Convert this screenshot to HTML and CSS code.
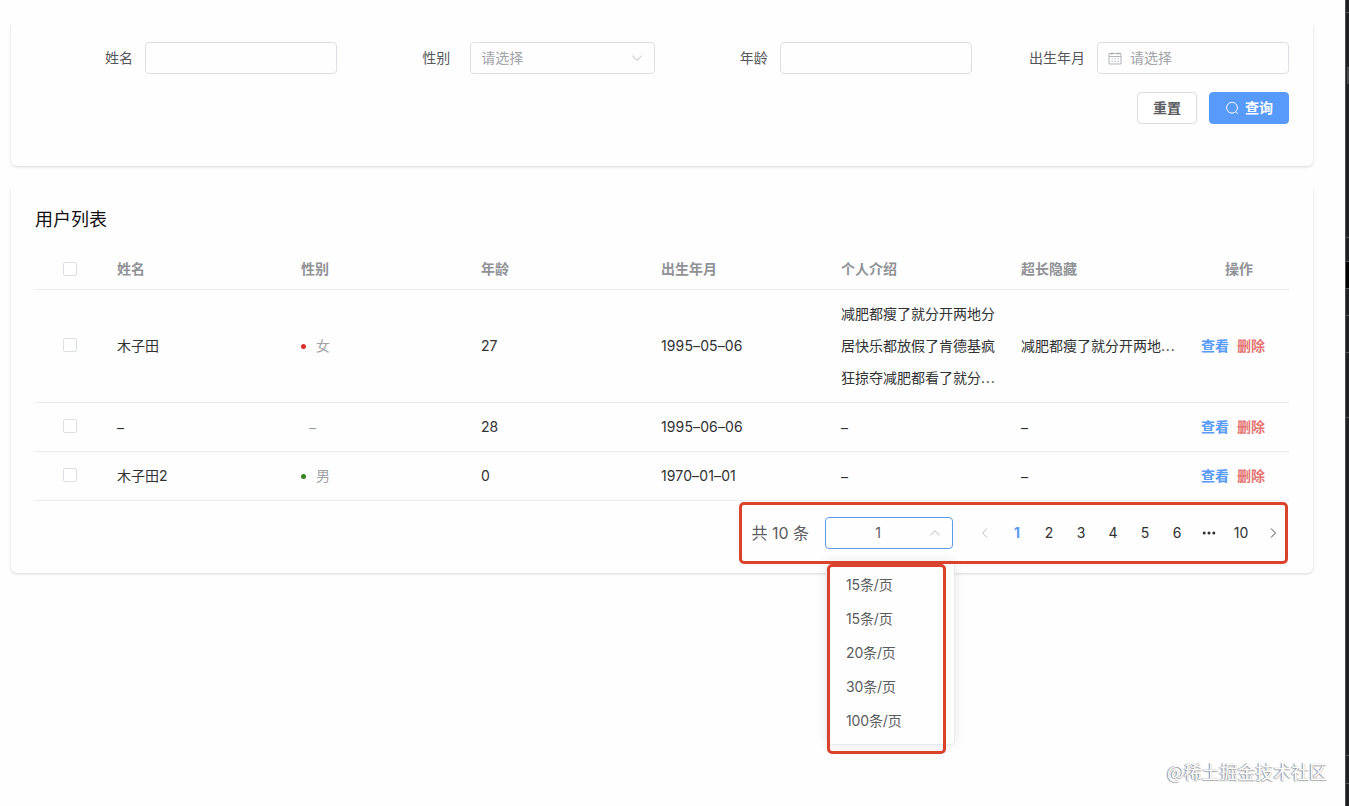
FILE: index.html
```html
<!DOCTYPE html>
<html lang="zh-CN">
<head>
<meta charset="utf-8">
<title>用户列表</title>
<link rel="stylesheet" href="styles.css">
</head>
<body>
<div class="page">
  <main class="main">
    <section class="card search">
      <div class="field"><label>姓名</label><div class="input"></div></div>
      <div class="field"><label>性别</label><div class="input select"><span>请选择</span>
        <svg class="arrow" viewBox="0 0 14 14"><path d="M2.2 4.7 7 9.3l4.8-4.6"/></svg></div></div>
      <div class="field"><label>年龄</label><div class="input"></div></div>
      <div class="field"><label>出生年月</label><div class="input date">
        <svg class="calendar" viewBox="0 0 14 14"><path d="M1 2.5h12v10.5H1zM1 5.5h12M4 1v3M10 1v3M3.5 8h1.3M6.4 8h1.3M9.3 8h1.3M3.5 10.5h1.3M6.4 10.5h1.3M9.3 10.5h1.3"/></svg><span>请选择</span></div></div>
      <div class="actions">
        <button class="btn">重置</button>
        <button class="btn primary"><svg class="search-icon" viewBox="0 0 14 14"><circle cx="7" cy="6.7" r="5.4"/><path d="m10.9 10.8 2 2"/></svg>查询</button>
      </div>
    </section>

    <section class="card list">
      <h1 class="title">用户列表</h1>
      <div class="table">
        <div class="row head">
          <div class="check"><i></i></div><div>姓名</div><div>性别</div><div>年龄</div><div>出生年月</div><div>个人介绍</div><div>超长隐藏</div><div class="ops">操作</div>
        </div>
        <div class="row tall">
          <div class="check"><i></i></div><div>木子田</div><div class="status"><b class="dot red"></b>女</div><div>27</div><div class="num">1995–05–06</div>
          <div class="intro">减肥都瘦了就分开两地分<br>居快乐都放假了肯德基疯<br>狂掠夺减肥都看了就分<span class="dots">...</span></div>
          <div>减肥都瘦了就分开两地<span class="dots">...</span></div><div class="ops links"><a>查看</a><a class="danger">删除</a></div>
        </div>
        <div class="row">
          <div class="check"><i></i></div><div class="dash">–</div><div class="status empty">–</div><div>28</div><div class="num">1995–06–06</div><div class="dash">–</div><div class="dash">–</div><div class="ops links"><a>查看</a><a class="danger">删除</a></div>
        </div>
        <div class="row">
          <div class="check"><i></i></div><div>木子田2</div><div class="status"><b class="dot green"></b>男</div><div>0</div><div class="num">1970–01–01</div><div class="dash">–</div><div class="dash">–</div><div class="ops links"><a>查看</a><a class="danger">删除</a></div>
        </div>
      </div>
      <div class="pagination">
        <span class="total">共 10 条</span>
        <div class="size"><span>1</span>
          <svg class="arrow" viewBox="0 0 14 14"><path d="M2.2 9.3 7 4.7l4.8 4.6"/></svg>
          <div class="menu"><div>15条/页</div><div>15条/页</div><div>20条/页</div><div>30条/页</div><div>100条/页</div></div>
        </div>
        <div class="pager">
          <svg class="prev" viewBox="0 0 14 14"><path d="M9 2.5 4.5 7 9 11.5"/></svg>
          <span class="active">1</span><span>2</span><span>3</span><span>4</span><span>5</span><span>6</span>
          <svg class="more" viewBox="0 0 14 14"><circle cx="2.2" cy="7" r="1.5"/><circle cx="7" cy="7" r="1.5"/><circle cx="11.8" cy="7" r="1.5"/></svg>
          <span>10</span>
          <svg class="next" viewBox="0 0 14 14"><path d="M5 2.5 9.5 7 5 11.5"/></svg>
        </div>
      </div>
    </section>
  </main>
  <aside class="edge"><i class="s1"></i><i class="s2"></i><i class="s3"></i><i class="s4"></i><i class="s5"></i><i class="s6"></i><i class="s7"></i><i class="s8"></i></aside>
  <div class="mark mark-pages"></div>
  <div class="mark mark-menu"></div>
  <div class="watermark">@稀土掘金技术社区</div>
</div>
</body>
</html>
```
FILE: styles.css
```css
* { box-sizing: border-box; }
body {
  margin: 0;
  background: #fefefe;
  color: #303133;
  font: 14px/20px Inter, "Noto Sans CJK SC", sans-serif;
}
.page { position: relative; display: flex; height: 806px; overflow: hidden; }
.main { flex: 1; padding: 20px 32px 0 11px; }
.card {
  border-radius: 6px;
  background: #fefefe;
  box-shadow: 0 -4px 0 #fefefe, 0 1px 3px rgba(0, 0, 0, .16);
}
.search {
  display: grid;
  grid-template-columns: repeat(4, 302px);
  justify-content: space-between;
  align-content: start;
  row-gap: 18px;
  height: 146px;
  padding: 22px 24px 0;
}
.field { display: flex; align-items: center; }
.field label { width: 98px; margin-right: 12px; text-align: right; color: #555659; }
.input {
  flex: 1;
  display: flex;
  align-items: center;
  height: 32px;
  border: 1px solid #dcdfe3;
  border-radius: 4px;
  padding: 0 10px;
  color: #a1a3a8;
}
.select { justify-content: space-between; margin: 0 -1px 0 8px; }
svg { fill: none; stroke: #b8babf; stroke-width: 1; flex: none; }
.arrow { width: 14px; height: 14px; }
.calendar { width: 14px; height: 14px; margin-right: 8px; stroke: #a8abb0; stroke-width: .9; }
.actions { grid-column: 1 / -1; display: flex; justify-content: flex-end; gap: 12px; }
.btn {
  display: flex;
  align-items: center;
  justify-content: center;
  width: 60px;
  height: 32px;
  padding: 0;
  border: 1px solid #d9dce0;
  border-radius: 4px;
  background: #fff;
  color: #5b5c5f;
  font: inherit;
  font-weight: 700;
}
.primary { width: 80px; gap: 6px; border-color: #579af9; background: #579af9; color: #fff; }
.search-icon { width: 14px; height: 14px; stroke: #fff; }

.list { height: 388px; margin-top: 19px; padding: 21px 24px 0; }
.title { margin: 0; height: 43px; color: #111; font-size: 18px; font-weight: 400; line-height: 28px; }
.row {
  display: grid;
  grid-template-columns: 70px 184px repeat(5, 180px) 100px;
  align-items: center;
  height: 49px;
  border-bottom: 1px solid #ebedf0;
}
.row > div { padding: 0 12px; white-space: nowrap; }
.row > .check { display: flex; justify-content: center; padding: 0 0 2px; }
.check i { width: 14px; height: 14px; border: 1px solid #dcdfe3; border-radius: 2px; background: #fff; }
.head { height: 41px; color: #909296; font-weight: 700; }
.head > .check { padding-bottom: 0; }
.tall { height: 113px; }
.intro { line-height: 32px; }
.num { letter-spacing: .12px; }
.dots { letter-spacing: .8px; }
.row > .dash { padding-top: 1px; }
.row > .status { display: flex; align-items: center; padding-bottom: 1px; color: #a0a1a4; }
.row > .empty { padding: 1px 0 0 20px; }
.dot { width: 5px; height: 5px; margin: 2px 10px 0 0; border-radius: 50%; }
.red { background: #dc2f2b; }
.green { background: #36821f; }
.ops { display: flex; justify-content: center; gap: 8px; font-weight: 700; }
.row > .links { justify-content: flex-start; }
.ops a { color: #579af9; }
.ops .danger { color: #e57472; }

.pagination { display: flex; align-items: center; justify-content: flex-end; height: 32px; margin-top: 16px; }
.total { margin-right: 16px; color: #5b5c60; font-size: 16px; }
.size {
  position: relative;
  display: flex;
  align-items: center;
  width: 128px;
  height: 32px;
  margin-right: 16px;
  padding-right: 10px;
  border: 1px solid #5b9bea;
  border-radius: 4px;
  color: #5b5c60;
}
.size span { flex: 1; padding-left: 2px; text-align: center; }
.menu {
  position: absolute;
  top: 43px;
  left: 0;
  width: 129px;
  height: 184px;
  padding: 6px 19px;
  border: 1px solid #e8eaee;
  border-radius: 4px;
  background: #fefefe;
  box-shadow: 0 0 12px rgba(0, 0, 0, .09);
  line-height: 34px;
  letter-spacing: -.15px;
}
.pager { display: flex; align-items: center; text-align: center; }
.pager span { width: 32px; }
.pager svg { width: 14px; height: 14px; margin: 0 9px; }
.pager .active { color: #579af9; font-weight: 700; }
.pager .next { stroke: #46474a; }
.pager .more { fill: #303133; stroke: none; }

/* Red outlines laid over the pagination and its menu */
.mark { position: absolute; border: 3px solid #da432b; border-radius: 5px; }
.mark-pages { left: 739px; top: 502px; width: 549px; height: 62px; }
.mark-menu { left: 827px; top: 564px; width: 119px; height: 190px; }

.watermark {
  position: absolute;
  left: 1167px;
  top: 758px;
  color: #fff;
  font: 18px/26px "Noto Sans CJK SC", sans-serif;
  letter-spacing: -.1px;
  white-space: nowrap;
  text-shadow: -1px 0 1px #888, 0 1px 1px #aaa;
}

.edge { display: flex; flex-direction: column; width: 4px; border-left: 1px solid #505152; background: #1e2021; }
.edge i { border-top: 1px solid #565859; }
.s1 { height: 55px; margin-top: 12px; }
.s2 { width: 2px; height: 17px; margin: 0 0 153px 1px; background: #48494a; }
.s3 { height: 24px; }
.s4 { height: 27px; background: #000; }
.s5 { height: 27px; }
.s6 { height: 37px; }
.s7 { height: 65px; }
.s8 { height: 338px; }
.edge::after { content: ""; height: 27px; border: solid #565859; border-width: 1px 0; }
```
